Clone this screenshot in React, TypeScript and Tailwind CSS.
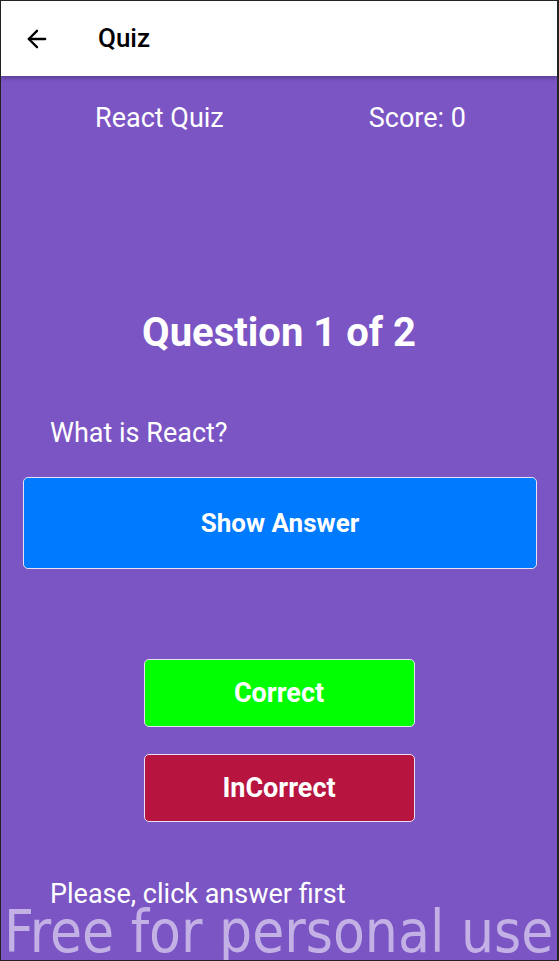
import { ArrowLeft } from "lucide-react";

export default function App() {
  return (
    <div className="relative h-[961px] w-[559px] overflow-hidden border-t border-l border-r-2 border-b border-[#232323] bg-[#7b55c4] font-['Roboto',sans-serif]">
      {/* app bar */}
      <header className="relative z-10 flex h-[75px] items-center bg-white shadow-[0_2px_4px_rgba(0,0,0,0.3)]">
        <ArrowLeft size={28} strokeWidth={2} className="ml-[22px] text-black" />
        <h1 className="ml-[47px] text-[26px] font-medium text-black">Quiz</h1>
      </header>

      <div className="flex h-[84px] items-center text-[27px] text-white">
        <span className="ml-[94px]">React Quiz</span>
        <span className="ml-[145px]">Score: 0</span>
      </div>

      <h2 className="mt-[149px] text-center text-[40px] font-bold leading-[48px] text-white">Question 1 of 2</h2>

      <p className="ml-[49px] mt-[60px] text-[27px] leading-[32px] text-white">What is React?</p>

      <button className="mx-[22px] mt-[28px] flex h-[92px] w-[514px] items-center justify-center rounded-[5px] border border-[#e8e0f5] bg-[#007bff] text-[26px] font-bold text-white">
        Show Answer
      </button>

      <div className="mt-[90px] flex flex-col items-center gap-[27px]">
        <button className="flex h-[68px] w-[271px] items-center justify-center rounded-[5px] border border-[#e8e0f5] bg-[#00ff00] text-[27px] font-bold text-white">
          Correct
        </button>
        <button className="flex h-[68px] w-[271px] items-center justify-center rounded-[5px] border border-[#e8e0f5] bg-[#b71540] text-[27px] font-bold text-white">
          InCorrect
        </button>
      </div>

      <p className="ml-[49px] mt-[56px] text-[27px] leading-[32px] text-white">Please, click answer first</p>

      {/* watermark */}
      <div className="absolute left-[3px] top-[902px] whitespace-nowrap font-['DejaVu_Sans_Condensed','DejaVu_Sans',sans-serif] text-[58px] leading-none text-[#cbbbe9]/90">
        Free for personal use
      </div>
    </div>
  );
}
